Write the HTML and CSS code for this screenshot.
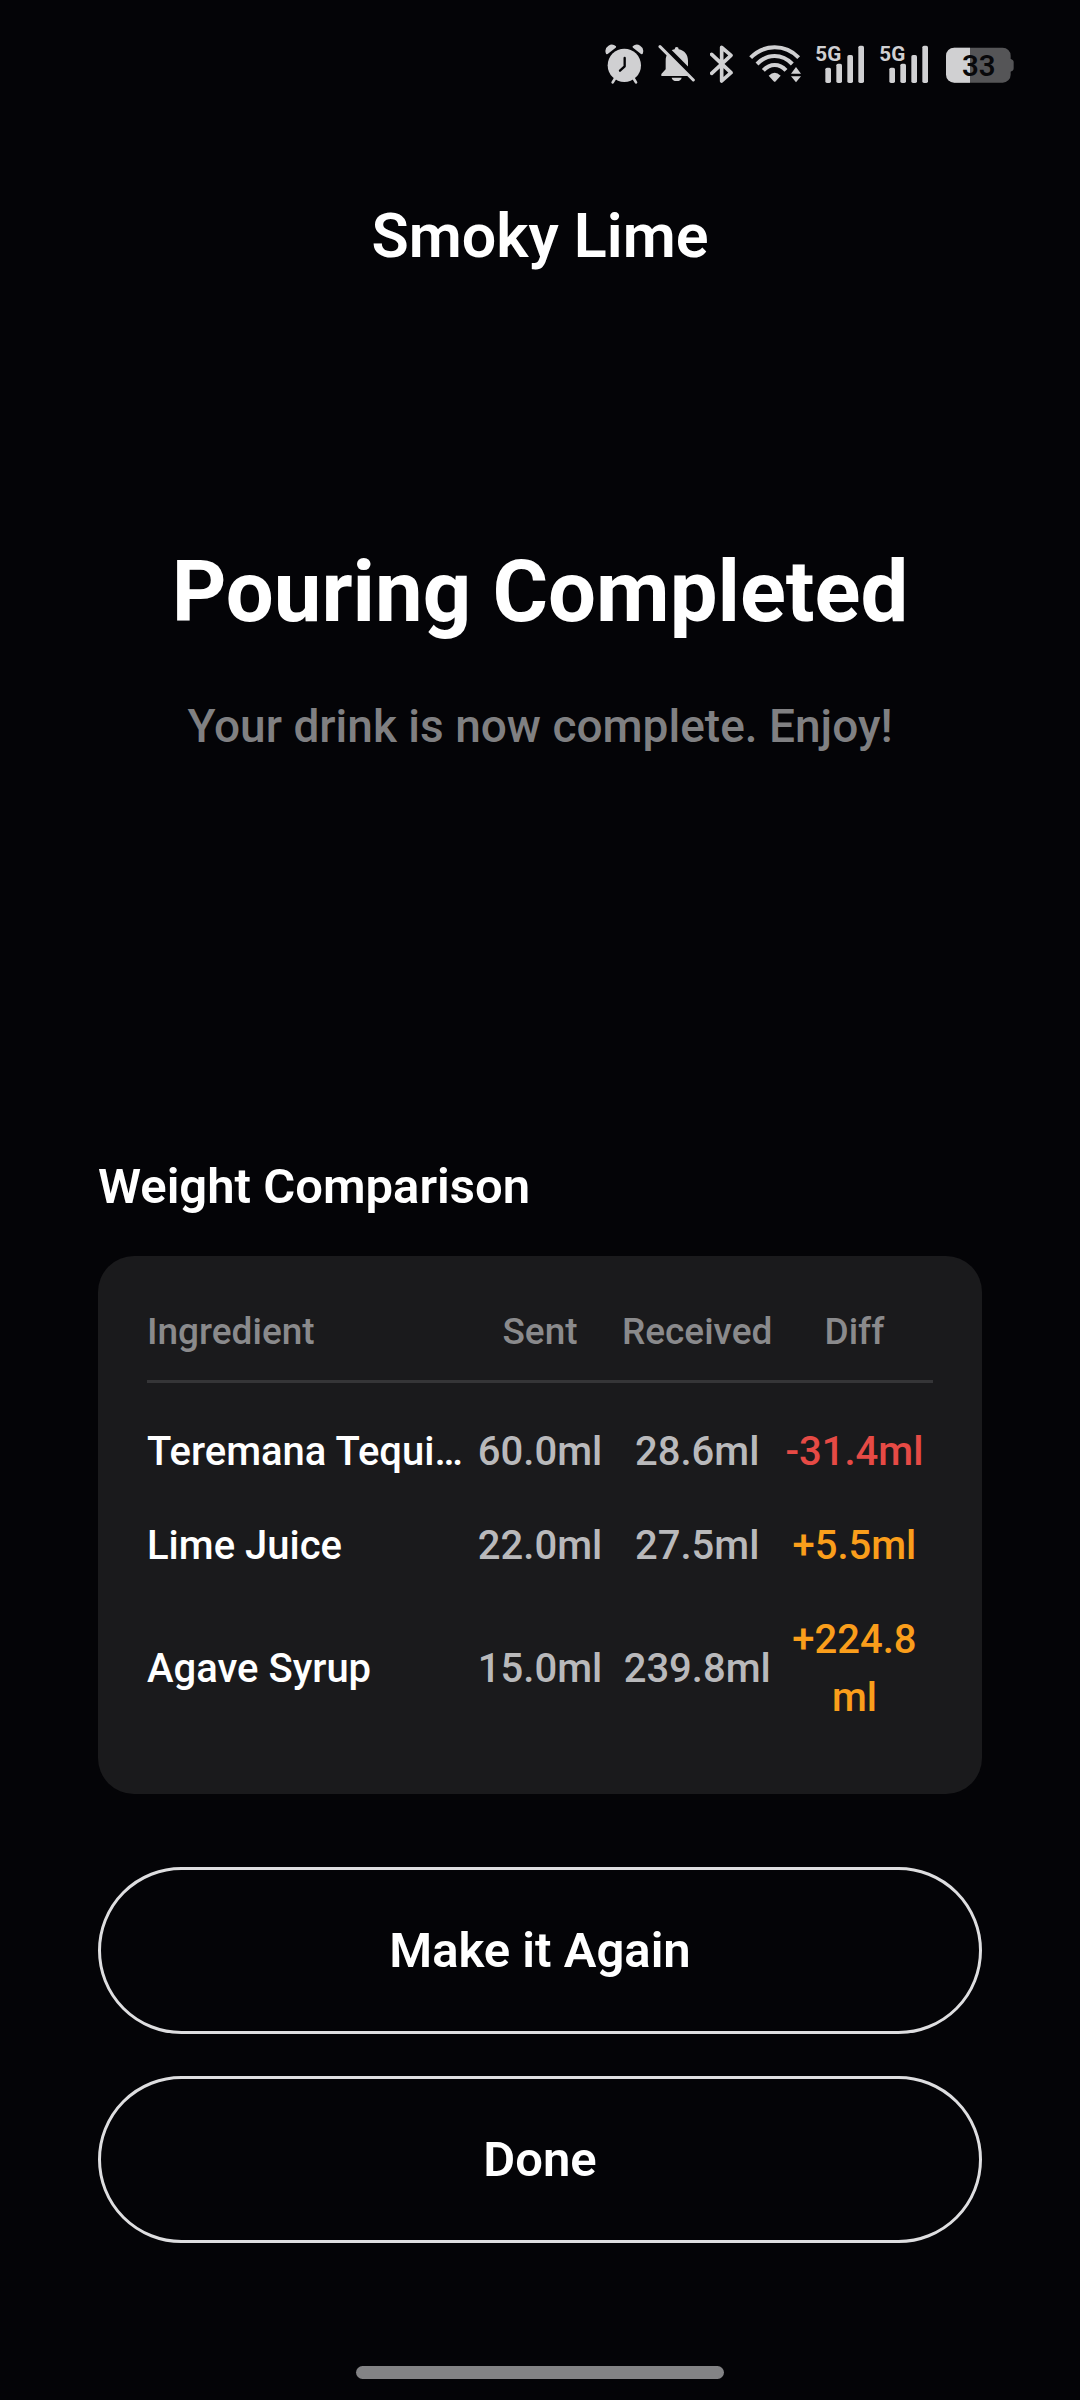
FILE: index.html
```html
<!DOCTYPE html>
<html lang="en">
<head>
<meta charset="utf-8">
<meta name="viewport" content="width=device-width, initial-scale=1">
<title>Smoky Lime</title>
<link rel="stylesheet" href="styles.css">
</head>
<body>
<div class="status-bar">
  <svg class="icon" width="40" height="42" viewBox="42 39 120 126" role="img" aria-label="Alarm set">
    <path d="M47 68a19 19 0 0 1 31-19q1 3-2 5L53 72q-5 2-6-4zM159 68a19 19 0 0 0-31-19q-1 3 2 5l23 18q5 2 6-4z"/>
    <path d="M76 144l-8 13M130 144l8 13" fill="none" stroke="currentColor" stroke-width="8" stroke-linecap="round"/>
    <circle cx="103" cy="106" r="50"/>
    <path d="M104 84v25l-14 13" fill="none" stroke="#040407" stroke-width="7" stroke-linecap="round" stroke-linejoin="round"/>
  </svg>
  <svg class="icon" width="38" height="42" viewBox="204 39 114 126" role="img" aria-label="Notifications muted">
    <path d="M254 58q0-7 6-7t6 7c18 3 28 17 28 34v26l13 14v6h-93v-6l13-14V92c0-17 10-31 27-34z"/>
    <path d="M245 143h30q-2 10-15 10t-15-10z"/>
    <path d="M216 44L318 146" fill="none" stroke="#040407" stroke-width="18"/>
    <path d="M210 50L310 150" fill="none" stroke="currentColor" stroke-width="9" stroke-linecap="round"/>
  </svg>
  <svg class="icon" width="25" height="42" viewBox="360 39 75 126" role="img" aria-label="Bluetooth on">
    <path d="M365 73l58 55-28 25V52l28 24-58 54" fill="none" stroke="currentColor" stroke-width="11" stroke-linecap="round" stroke-linejoin="round"/>
  </svg>
  <svg class="icon" width="52" height="42" viewBox="477 39 156 126" role="img" aria-label="Wi-Fi connected">
    <g fill="none" stroke="currentColor" stroke-width="12">
      <path d="M482 83Q512 52 554 52T626 83"/>
      <path d="M501 102Q524 78 554 78T607 102"/>
      <path d="M520 121Q535 105 554 105T588 121"/>
    </g>
    <path d="M536 137q18-17 36 0l-15 17q-3 3-6 0z"/>
    <path d="M618 111l15 20h-30zM618 157l15-18h-30z"/>
  </svg>
  <svg class="icon" width="50" height="42" viewBox="45 39 150 126" role="img" aria-label="5G, full signal">
    <text class="network" x="46" y="93">5G</text>
    <rect x="76" y="113" width="17" height="46" rx="5"/>
    <rect x="109" y="101" width="17" height="58" rx="5"/>
    <rect x="142" y="75" width="17" height="84" rx="5"/>
    <rect x="175" y="47" width="17" height="112" rx="5"/>
  </svg>
  <svg class="icon" width="50" height="42" viewBox="45 39 150 126" role="img" aria-label="5G, full signal">
    <text class="network" x="46" y="93">5G</text>
    <rect x="76" y="113" width="17" height="46" rx="5"/>
    <rect x="109" y="101" width="17" height="58" rx="5"/>
    <rect x="142" y="75" width="17" height="84" rx="5"/>
    <rect x="175" y="47" width="17" height="112" rx="5"/>
  </svg>
  <svg class="icon" width="72" height="42" viewBox="429 39 216 126" role="img" aria-label="Battery 33 percent">
    <path class="battery-shell" d="M462 53H608a24 24 0 0 1 24 24V87q9 2 9 10v18q0 8-9 10v9a24 24 0 0 1-24 24H462z"/>
    <path d="M510 53H462a24 24 0 0 0-24 24v57a24 24 0 0 0 24 24h48z"/>
    <text class="battery-level" x="536" y="138" text-anchor="middle">33</text>
  </svg>
</div>

<header class="app-bar">
  <h1 class="title">Smoky Lime</h1>
</header>

<main class="content">
  <section class="hero">
    <h2 class="hero-title">Pouring Completed</h2>
    <p class="hero-text">Your drink is now complete. Enjoy!</p>
  </section>

  <section class="comparison">
    <h3 class="section-title" id="comparison-title">Weight Comparison</h3>
    <div class="card">
      <table class="weights" aria-labelledby="comparison-title">
        <thead>
          <tr><th class="name" scope="col">Ingredient</th><th scope="col">Sent</th><th scope="col">Received</th><th scope="col">Diff</th></tr>
        </thead>
        <tbody>
          <tr><td class="name">Teremana Tequi…</td><td>60.0ml</td><td>28.6ml</td><td class="under">-31.4ml</td></tr>
          <tr><td class="name">Lime Juice</td><td>22.0ml</td><td>27.5ml</td><td class="over">+5.5ml</td></tr>
          <tr><td class="name">Agave Syrup</td><td>15.0ml</td><td>239.8ml</td><td class="over">+224.8<wbr>ml</td></tr>
        </tbody>
      </table>
    </div>
  </section>

  <div class="actions">
    <button class="button" type="button">Make it Again</button>
    <button class="button" type="button">Done</button>
  </div>
</main>

<footer class="nav-area"><div class="home-indicator"></div></footer>
</body>
</html>
```
FILE: styles.css
```css
* {
  box-sizing: border-box;
}

body {
  display: flex;
  flex-direction: column;
  min-height: 100vh;
  margin: 0;
  background: #040407;
  color: #fff;
  font-family: Roboto, "Liberation Sans", sans-serif;
  font-weight: 500;
}

h1, h2, h3, p {
  margin: 0;
}

.status-bar {
  display: flex;
  justify-content: flex-end;
  gap: 14px;
  padding: 43px 65px 44px;
  color: #d0d0d2;
}

.icon {
  display: block;
  flex: none;
  fill: currentColor;
}

.network {
  font-size: 62px;
  font-weight: 700;
}

.battery-shell {
  fill: #555557;
}

.battery-level {
  fill: #08080a;
  font-size: 88px;
  font-weight: 600;
}

.app-bar {
  padding: 63px 98px 0;
  text-align: center;
}

.title {
  font-size: 61px;
  font-weight: 600;
  line-height: 88px;
}

.content {
  display: flex;
  flex: 1;
  flex-direction: column;
  padding: 0 98px;
}

.hero {
  display: flex;
  flex: 1;
  flex-direction: column;
  justify-content: center;
  gap: 40px;
  padding-bottom: 143px;
  text-align: center;
}

.hero-title {
  font-size: 85px;
  font-weight: 700;
  line-height: 122px;
}

.hero-text {
  color: #808082;
  font-size: 46px;
  line-height: 66px;
}

.section-title {
  margin-bottom: 34px;
  font-size: 49px;
  font-weight: 600;
  line-height: 70px;
}

.card {
  padding: 49px;
  border-radius: 36px;
  background: #1a1a1c;
}

.weights {
  width: 100%;
  border-collapse: separate;
  border-spacing: 0;
  table-layout: fixed;
  color: #b9b9bb;
  font-size: 40px;
  line-height: 58px;
  text-align: center;
}

.weights th {
  padding: 0 0 22px;
  border-bottom: 3px solid #353537;
  color: #8a8a8c;
  font-size: 37px;
  font-weight: 500;
  line-height: 53px;
}

.weights td {
  padding: 18px 0;
}

.weights tbody::before {
  display: block;
  height: 22px;
  content: "";
}

.weights .name {
  width: 40%;
  text-align: left;
  white-space: nowrap;
}

.weights td.name {
  color: #fff;
}

.weights .under {
  color: #e64a45;
}

.weights .over {
  color: #fa9e1b;
}

.actions {
  display: flex;
  flex-direction: column;
  gap: 42px;
  padding-top: 73px;
}

.button {
  padding: 46px;
  border: 3px solid #dedee0;
  border-radius: 84px;
  background: transparent;
  color: #fff;
  font: 600 49px/69px Roboto, "Liberation Sans", sans-serif;
}

.nav-area {
  padding: 123px 0 21px;
}

.home-indicator {
  width: 34%;
  height: 13px;
  margin: 0 auto;
  border-radius: 7px;
  background: #838385;
}
```
